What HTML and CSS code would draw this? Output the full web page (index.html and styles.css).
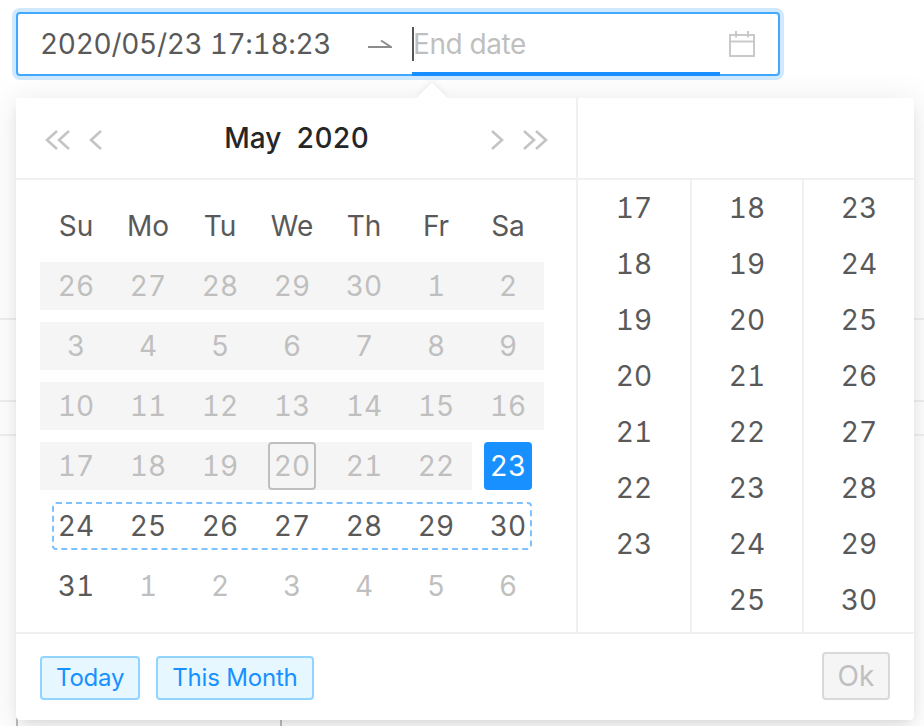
FILE: index.html
```html
<!DOCTYPE html>
<html lang="en">
<head>
    <meta charset="UTF-8">
    <meta name="viewport" content="width=device-width, initial-scale=1.0">
    <title>Date Range Picker</title>
    <link rel="stylesheet" href="styles.css">
</head>
<body>
    <!-- faint table lines of the page behind the popup -->
    <div class="backdrop">
        <div class="bg-line line-a"></div>
        <div class="bg-line line-b"></div>
        <div class="bg-line line-c"></div>
        <div class="bg-col col-a"></div>
        <div class="bg-col col-b"></div>
    </div>

    <div class="range-input">
        <div class="range-start">2020/05/23 17:18:23</div>
        <svg class="range-arrow" width="24" height="10" viewBox="0 0 24 10" fill="none">
            <path d="M0 8H23L13 1.500" stroke="#8c8c8c" stroke-width="2"/>
        </svg>
        <div class="range-end"><span class="caret"></span><span class="placeholder">End date</span></div>
        <svg class="calendar-icon" width="26" height="26" viewBox="0 0 26 26" fill="none">
            <path d="M1 4H25V25H1ZM1 10.500H25M7 0V6.500M19 0V6.500" stroke="#c9c9c9" stroke-width="2"/>
        </svg>
        <div class="active-bar"></div>
    </div>

    <div class="popup">
        <div class="popup-arrow"></div>
        <div class="popup-main">
            <div class="date-panel">
                <div class="panel-head">
                    <svg class="nav-icon" width="26" height="20" viewBox="0 0 26 20" fill="none">
                        <path d="M12 1L2 10L12 19M24 1L14 10L24 19" stroke="#c4c4c4" stroke-width="2.600"/>
                    </svg>
                    <svg class="nav-icon nav-prev" width="14" height="20" viewBox="0 0 14 20" fill="none">
                        <path d="M12 1L2 10L12 19" stroke="#c4c4c4" stroke-width="2.600"/>
                    </svg>
                    <div class="panel-title"><span>May</span><span>2020</span></div>
                    <svg class="nav-icon nav-next" width="14" height="20" viewBox="0 0 14 20" fill="none">
                        <path d="M2 1L12 10L2 19" stroke="#c4c4c4" stroke-width="2.600"/>
                    </svg>
                    <svg class="nav-icon" width="26" height="20" viewBox="0 0 26 20" fill="none">
                        <path d="M2 1L12 10L2 19M14 1L24 10L14 19" stroke="#c4c4c4" stroke-width="2.600"/>
                    </svg>
                </div>
                <div class="panel-body">
                    <div class="week-row">
                        <div>Su</div><div>Mo</div><div>Tu</div><div>We</div><div>Th</div><div>Fr</div><div>Sa</div>
                    </div>
                    <div class="day-row disabled">
                        <div class="day">26</div><div class="day">27</div><div class="day">28</div><div class="day">29</div><div class="day">30</div><div class="day">1</div><div class="day">2</div>
                    </div>
                    <div class="day-row disabled">
                        <div class="day">3</div><div class="day">4</div><div class="day">5</div><div class="day">6</div><div class="day">7</div><div class="day">8</div><div class="day">9</div>
                    </div>
                    <div class="day-row disabled">
                        <div class="day">10</div><div class="day">11</div><div class="day">12</div><div class="day">13</div><div class="day">14</div><div class="day">15</div><div class="day">16</div>
                    </div>
                    <div class="day-row disabled">
                        <div class="day">17</div><div class="day">18</div><div class="day">19</div><div class="day"><span class="today">20</span></div><div class="day">21</div><div class="day">22</div><div class="day selected-cell"><span class="selected">23</span></div>
                    </div>
                    <div class="day-row hover-range">
                        <div class="day">24</div><div class="day">25</div><div class="day">26</div><div class="day">27</div><div class="day">28</div><div class="day">29</div><div class="day">30</div>
                    </div>
                    <div class="day-row">
                        <div class="day">31</div><div class="day muted">1</div><div class="day muted">2</div><div class="day muted">3</div><div class="day muted">4</div><div class="day muted">5</div><div class="day muted">6</div>
                    </div>
                </div>
            </div>
            <div class="time-panel">
                <div class="panel-head"></div>
                <div class="time-cols">
                    <div class="time-col first">
                        <div>17</div><div>18</div><div>19</div><div>20</div><div>21</div><div>22</div><div>23</div>
                    </div>
                    <div class="time-col">
                        <div>18</div><div>19</div><div>20</div><div>21</div><div>22</div><div>23</div><div>24</div><div>25</div>
                    </div>
                    <div class="time-col">
                        <div>23</div><div>24</div><div>25</div><div>26</div><div>27</div><div>28</div><div>29</div><div>30</div>
                    </div>
                </div>
            </div>
        </div>
        <div class="popup-foot">
            <button class="tag-btn">Today</button>
            <button class="tag-btn">This Month</button>
            <button class="ok-btn">Ok</button>
        </div>
    </div>
</body>
</html>
```

FILE: styles.css
```css
* {
    box-sizing: border-box;
}

body {
    margin: 0;
    padding: 12px 16px 0;
    height: 726px;
    overflow: hidden;
    background-color: #fff;
    font-family: Inter, "Liberation Sans", sans-serif;
    font-size: 28px;
    font-feature-settings: "tnum", "cv01";
    color: #595959;
}

.backdrop {
    position: absolute;
    left: 0;
    top: 0;
    width: 924px;
    height: 726px;
}

.bg-line {
    position: absolute;
    left: 0;
    width: 100%;
    height: 2px;
    background-color: #f0f0f0;
}

.line-a {
    top: 318px;
}

.line-b {
    top: 400px;
}

.line-c {
    top: 434px;
}

.bg-col {
    position: absolute;
    top: 700px;
    width: 2px;
    height: 26px;
    background-color: #bdbdbd;
}

.col-a {
    left: 16px;
}

.col-b {
    left: 280px;
}

.range-input {
    position: relative;
    display: flex;
    align-items: center;
    width: 764px;
    height: 64px;
    padding-left: 22px;
    background-color: #fff;
    border: 2px solid #40a9ff;
    border-radius: 4px;
    box-shadow: 0 0 0 4px rgba(24, 144, 255, 0.2);
}

.range-start {
    width: 328px;
    white-space: nowrap;
    letter-spacing: -0.3px;
}

.range-arrow {
    flex-shrink: 0;
}

.range-end {
    display: flex;
    align-items: center;
    width: 308px;
    margin-left: 20px;
}

.caret {
    width: 2px;
    height: 34px;
    background-color: #555;
}

.placeholder {
    margin-left: -1px;
    color: #bfbfbf;
    letter-spacing: -0.4px;
}

.calendar-icon {
    margin-left: 9px;
}

.active-bar {
    position: absolute;
    left: 394px;
    bottom: -2px;
    width: 308px;
    height: 4px;
    background-color: #1890ff;
}

.popup {
    position: relative;
    width: 898px;
    height: 622px;
    margin-top: 22px;
    background-color: #fff;
    border-radius: 4px;
    box-shadow: 0 6px 12px -4px rgba(0, 0, 0, 0.12), 0 4px 32px 4px rgba(0, 0, 0, 0.08);
}

.popup-arrow {
    position: absolute;
    left: 405px;
    top: -11px;
    width: 22px;
    height: 22px;
    background-color: #fff;
    transform: rotate(45deg);
    box-shadow: -2px -2px 5px rgba(0, 0, 0, 0.05);
}

.popup-main {
    position: relative;
    display: flex;
    height: 536px;
    background-color: #fff;
    border-bottom: 2px solid #f0f0f0;
    border-radius: 4px 4px 0 0;
}

.date-panel {
    width: 562px;
    border-right: 2px solid #f0f0f0;
    flex-shrink: 0;
}

.panel-head {
    display: flex;
    align-items: center;
    height: 82px;
    padding: 0 28px 0 29px;
    border-bottom: 2px solid #f0f0f0;
}

.nav-icon {
    flex-shrink: 0;
    margin-top: 3px;
}

.nav-prev {
    margin-left: 18px;
    margin-right: 20px;
}

.nav-next {
    margin-left: 20px;
    margin-right: 18px;
}

.panel-title {
    flex: 1;
    display: flex;
    justify-content: center;
    gap: 15px;
    font-weight: 500;
    color: #262626;
}

.panel-body {
    padding: 22px 24px 0 24px;
}

.week-row,
.day-row {
    position: relative;
    display: grid;
    grid-template-columns: repeat(7, 72px);
    width: 504px;
    height: 48px;
    margin-bottom: 12px;
    text-align: center;
    line-height: 48px;
}

.day {
    height: 48px;
    line-height: 49px;
    color: #595959;
}

.disabled .day {
    background-color: #f5f5f5;
    color: #bfbfbf;
}

.day.muted {
    color: #bfbfbf;
}

.today {
    display: block;
    width: 48px;
    height: 48px;
    margin: 0 auto;
    line-height: 45px;
    border: 2px solid #bfbfbf;
    border-radius: 4px;
}

.disabled .selected-cell {
    background-color: #fff;
}

.selected {
    display: block;
    width: 48px;
    height: 48px;
    margin: 0 auto;
    border-radius: 4px;
    background-color: #1890ff;
    color: #fff;
}

.hover-range::before {
    content: "";
    position: absolute;
    left: 12px;
    right: 12px;
    top: 0;
    bottom: 0;
    border: 2px dashed #7ec1ff;
    border-radius: 4px;
}

.time-panel {
    flex: 1;
}

.time-cols {
    display: flex;
    height: 452px;
}

.time-col {
    width: 112px;
    height: 100%;
    text-align: center;
    border-left: 2px solid #f0f0f0;
}

.time-col div {
    height: 56px;
    line-height: 57px;
}

.time-col.first {
    border-left: 0;
}

.popup-foot {
    display: flex;
    align-items: flex-end;
    height: 86px;
    padding: 0 24px 20px;
    gap: 16px;
}

.tag-btn {
    height: 44px;
    padding: 0 14px 1px;
    background-color: #e6f7ff;
    border: 2px solid #91d5ff;
    border-radius: 4px;
    color: #1890ff;
    font-family: inherit;
    font-size: 24px;
    letter-spacing: -0.2px;
}

.ok-btn {
    width: 68px;
    height: 48px;
    margin-left: auto;
    padding: 0;
    background-color: #f5f5f5;
    border: 2px solid #d9d9d9;
    border-radius: 4px;
    color: #bfbfbf;
    font-family: inherit;
    font-size: 28px;
}
```
